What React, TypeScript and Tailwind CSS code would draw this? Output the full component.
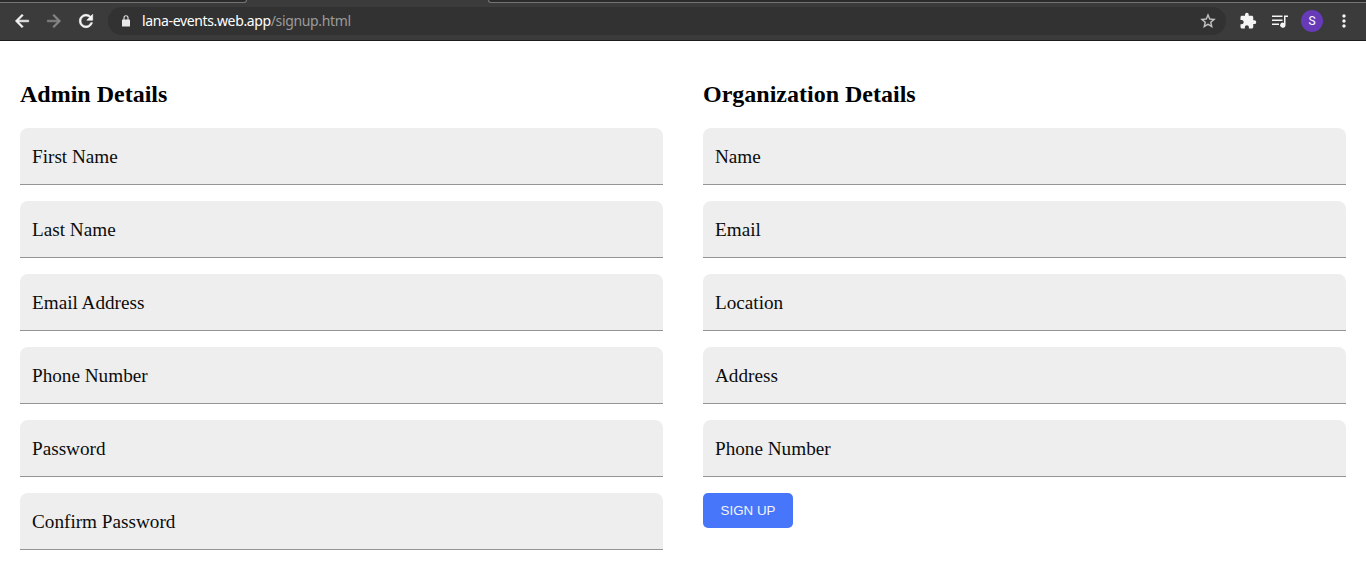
import React from "react";
import { MdExtension, MdMoreVert } from "react-icons/md";

type GlyphProps = { d: string; weight: number; className: string };

function Glyph({ d, weight, className }: GlyphProps) {
  return (
    <svg className={className} viewBox="0 0 24 24" fill="currentColor" stroke="currentColor" strokeWidth={weight}>
      <path d={d} />
    </svg>
  );
}

const back = "M20 11H7.83l5.59-5.59L12 4l-8 8 8 8 1.41-1.41L7.83 13H20v-2z";
const forward = "M12 4l-1.41 1.41L16.17 11H4v2h12.17l-5.58 5.59L12 20l8-8z";
const reload =
  "M17.65 6.35C16.2 4.9 14.21 4 12 4c-4.42 0-7.99 3.58-7.99 8s3.57 8 7.99 8c3.73 0 6.84-2.55 7.73-6h-2.08c-.82 2.33-3.04 4-5.65 4-3.31 0-6-2.69-6-6s2.69-6 6-6c1.66 0 3.14.69 4.22 1.78L13 11h7V4l-2.35 2.35z";
const star =
  "M22 9.24l-7.19-.62L12 2 9.19 8.63 2 9.24l5.46 4.73L5.82 21 12 17.27 18.18 21l-1.63-7.03L22 9.24zM12 15.4l-3.76 2.27 1-4.28-3.32-2.88 4.38-.38L12 6.1l1.71 4.04 4.38.38-3.32 2.88 1 4.28L12 15.4z";

function BrowserBar() {
  return (
    <header className="h-[41px] shrink-0 border-b border-[#1b1b1b] bg-[#3b3b3b]">
      <div className="flex h-[3px] justify-between">
        <div className="w-[247px] rounded-br-[3px] border-b border-r border-[#757575] bg-[#2b2b2b]" />
        <div className="w-[878px] rounded-bl-[3px] border-b border-l border-[#757575] bg-[#2b2b2b]" />
      </div>
      <div className="flex h-[36px] items-center">
        <Glyph d={back} weight={0.7} className="ml-[12px] size-[20px] text-[#f5f5f5]" />
        <Glyph d={forward} weight={0.7} className="ml-[12px] size-[20px] text-[#878787]" />
        <Glyph d={reload} weight={0.8} className="ml-[12px] size-[20px] text-[#f5f5f5]" />
        <div className="ml-3 flex h-7 w-[1118px] items-center rounded-full bg-[#323232] pl-[14px] pr-[9px]">
          <svg className="mb-px h-3 w-2 text-[#e8e8e8]" viewBox="0 0 8 12">
            <rect x="0" y="4.5" width="8" height="7" rx="0.6" fill="currentColor" />
            <path d="M2 5V2.8a2 2 0 0 1 4 0V5" fill="none" stroke="currentColor" strokeWidth="1.1" />
          </svg>
          <div className="mb-px ml-3 whitespace-nowrap font-['Noto_Sans',sans-serif] text-[14px] leading-5 tracking-[-0.36px] text-[#9b9b9b]">
            <span className="text-white">lana-events.web.app</span>/signup.html
          </div>
          <Glyph d={star} weight={0.3} className="ml-auto size-[18px] text-[#c8c8c8]" />
        </div>
        <MdExtension className="ml-[13px] size-[18px] text-[#f5f5f5]" />
        <svg className="ml-[15px] h-[13px] w-4 text-[#f5f5f5]" viewBox="0 0 16 13" fill="currentColor">
          <path d="M0 .5h10.5V2H0zM0 4.5h10.5V6H0zM0 8.5h7V10H0z" />
          <path d="M12 .5h4V2h-2.5v8.2A2.7 2.6 0 1 1 12 7.9z" />
        </svg>
        <div className="ml-[13px] flex size-[22px] items-center justify-center rounded-full bg-[#673ab7] font-[Roboto,sans-serif] text-[12px] text-white">S</div>
        <MdMoreVert className="ml-[11px] size-[20px] text-[#f5f5f5]" />
      </div>
    </header>
  );
}

function Field({ label }: { label: string }) {
  return (
    <div className="mb-4 flex h-[57px] items-center rounded-t-lg border-b border-[#949494] bg-[#eeeeee] px-3 pt-px text-[19.2px] leading-[22px] text-[#0c0c0c]">
      {label}
    </div>
  );
}

function Section({ title, fields, children }: { title: string; fields: string[]; children?: React.ReactNode }) {
  return (
    <section className="flex-1 px-5 pt-10">
      <h2 className="mb-5 text-[24px] font-bold leading-[27px] text-black">{title}</h2>
      {fields.map((label) => (
        <Field key={label} label={label} />
      ))}
      {children}
    </section>
  );
}

export default function App() {
  return (
    <div className="flex h-[584px] w-[1366px] flex-col overflow-hidden bg-white font-['Liberation_Serif',serif]">
      <BrowserBar />
      <main className="flex">
        <Section title="Admin Details" fields={["First Name", "Last Name", "Email Address", "Phone Number", "Password", "Confirm Password"]} />
        <Section title="Organization Details" fields={["Name", "Email", "Location", "Address", "Phone Number"]}>
          <button className="block h-[35px] w-[90px] rounded-[5px] bg-[#4776fb] font-['Liberation_Sans',sans-serif] text-[13.333px] text-[#f4f4f4]">
            SIGN UP
          </button>
        </Section>
      </main>
    </div>
  );
}
